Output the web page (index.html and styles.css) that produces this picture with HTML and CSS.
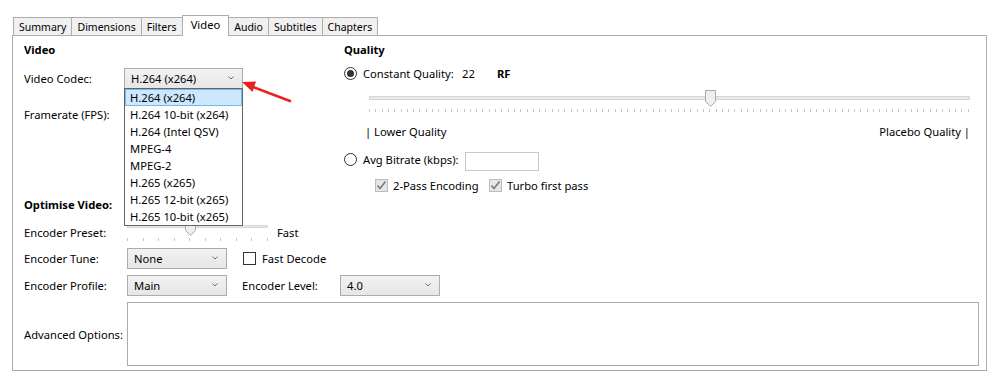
FILE: index.html
```html
<!DOCTYPE html>
<html lang="en">
<head>
    <meta charset="UTF-8">
    <title>Video</title>
    <link rel="stylesheet" href="styles.css">
</head>
<body>
    <div class="window">
        <div class="tabs">
            <div class="tab first">Summary</div>
            <div class="tab">Dimensions</div>
            <div class="tab">Filters</div>
            <div class="tab active">Video</div>
            <div class="tab">Audio</div>
            <div class="tab">Subtitles</div>
            <div class="tab">Chapters</div>
        </div>

        <div class="panel">
            <div class="top">
                <div class="col-left">
                    <div class="heading">Video</div>

                    <div class="row row-codec">
                        <span class="label">Video Codec:</span>
                        <div class="codec-wrap">
                            <div class="select select-codec">H.264 (x264)<svg class="chev" width="6" height="4" viewBox="0 0 6 4"><polyline points="0.5,0.5 3,3 5.5,0.5" fill="none" stroke="#707070" stroke-width="1"/></svg></div>
                            <ul class="dropdown">
                                <li class="selected">H.264 (x264)</li>
                                <li>H.264 10-bit (x264)</li>
                                <li>H.264 (Intel QSV)</li>
                                <li>MPEG-4</li>
                                <li>MPEG-2</li>
                                <li>H.265 (x265)</li>
                                <li>H.265 12-bit (x265)</li>
                                <li>H.265 10-bit (x265)</li>
                            </ul>
                            <svg class="callout" width="60" height="34" viewBox="0 0 60 34">
                                <line x1="16" y1="12.6" x2="54" y2="27" stroke="#e8231c" stroke-width="2.6" stroke-linecap="round"/>
                                <polygon points="6,8 20,7.5 16.5,18" fill="#e8231c"/>
                            </svg>
                        </div>
                    </div>

                    <div class="row row-fps">
                        <span class="label">Framerate (FPS):</span>
                    </div>

                    <div class="heading heading-opt">Optimise Video:</div>

                    <div class="row row-preset">
                        <span class="label">Encoder Preset:</span>
                        <div class="preset-slider">
                            <div class="track"></div>
                            <div class="ticks"></div>
                            <svg class="thumb" style="left: 44.5%" width="11" height="17" viewBox="0 0 11 17"><path d="M0.5,0.5 H10.5 V11.5 L5.5,16.5 L0.5,11.5 Z" fill="#efefef" stroke="#a9a9a9"/></svg>
                        </div>
                        <span class="preset-value">Fast</span>
                    </div>

                    <div class="row row-tune">
                        <span class="label">Encoder Tune:</span>
                        <div class="select">None<svg class="chev" width="6" height="4" viewBox="0 0 6 4"><polyline points="0.5,0.5 3,3 5.5,0.5" fill="none" stroke="#707070" stroke-width="1"/></svg></div>
                        <span class="checkbox"></span>
                        <span>Fast Decode</span>
                    </div>

                    <div class="row row-profile">
                        <span class="label">Encoder Profile:</span>
                        <div class="select">Main<svg class="chev" width="6" height="4" viewBox="0 0 6 4"><polyline points="0.5,0.5 3,3 5.5,0.5" fill="none" stroke="#707070" stroke-width="1"/></svg></div>
                        <span class="level-label">Encoder Level:</span>
                        <div class="select">4.0<svg class="chev" width="6" height="4" viewBox="0 0 6 4"><polyline points="0.5,0.5 3,3 5.5,0.5" fill="none" stroke="#707070" stroke-width="1"/></svg></div>
                    </div>
                </div>

                <div class="col-right">
                    <div class="heading">Quality</div>

                    <div class="row row-cq">
                        <span class="radio checked"></span>
                        <span class="cq-label">Constant Quality:</span>
                        <span class="cq-value">22</span>
                        <b>RF</b>
                    </div>

                    <div class="q-slider">
                        <div class="track"></div>
                        <div class="ticks"></div>
                        <svg class="thumb" style="left: 56.8%" width="11" height="17" viewBox="0 0 11 17"><path d="M0.5,0.5 H10.5 V11.5 L5.5,16.5 L0.5,11.5 Z" fill="#efefef" stroke="#a9a9a9"/></svg>
                    </div>

                    <div class="q-labels">
                        <span>| Lower Quality</span>
                        <span>Placebo Quality |</span>
                    </div>

                    <div class="row row-avg">
                        <span class="radio"></span>
                        <span class="avg-label">Avg Bitrate (kbps):</span>
                        <span class="textbox"></span>
                    </div>

                    <div class="row row-pass">
                        <span class="checkbox checked"><svg width="11" height="11" viewBox="0 0 11 11"><polyline points="1.5,5.5 4,8.5 9.5,1.5" fill="none" stroke="#7a7a7a" stroke-width="1.6"/></svg></span>
                        <span class="pass-label">2-Pass Encoding</span>
                        <span class="checkbox checked"><svg width="11" height="11" viewBox="0 0 11 11"><polyline points="1.5,5.5 4,8.5 9.5,1.5" fill="none" stroke="#7a7a7a" stroke-width="1.6"/></svg></span>
                        <span>Turbo first pass</span>
                    </div>
                </div>
            </div>

            <div class="row row-adv">
                <span class="label">Advanced Options:</span>
                <div class="textarea"></div>
            </div>
        </div>
    </div>
</body>
</html>
```

FILE: styles.css
```css
body {
    margin: 0;
    font-family: 'Noto Sans', 'Open Sans', sans-serif;
    font-size: 11.2px;
    color: #000;
    background: #fff;
}
.window {
    padding: 15px 0 0 12px;
}

/* tabs */
.tabs {
    display: flex;
    align-items: flex-end;
    height: 20px;
    padding-left: 1px;
    font-size: 10.5px;
}
.tab {
    height: 18px;
    line-height: 18px;
    padding: 0 5px;
    box-sizing: border-box;
    border: 1px solid #acacac;
    border-bottom: none;
    border-left: none;
    background: #f0f0f0;
}
.tab.first {
    border-left: 1px solid #acacac;
}
.tab.active {
    position: relative;
    height: 21px;
    line-height: 17px;
    margin-bottom: -1px;
    margin-left: -1px;
    padding: 0 8px;
    background: #fff;
    border-left: 1px solid #acacac;
    font-size: 11.2px;
    z-index: 1;
}

/* panel */
.panel {
    width: 975px;
    height: 336px;
    box-sizing: border-box;
    border: 1px solid #acacac;
    padding: 6px 16px 0 11px;
}
.top {
    display: flex;
}
.col-left {
    width: 320px;
    flex: none;
}
.col-right {
    flex: 1;
}
.heading {
    height: 16px;
    line-height: 16px;
    font-weight: bold;
}
.row {
    display: flex;
    align-items: center;
    white-space: nowrap;
}
.label {
    width: 103px;
    flex: none;
}

/* left column */
.row-codec {
    margin-top: 10px;
    height: 21px;
}
.codec-wrap {
    position: relative;
    margin-left: -3px;
}
.select {
    display: flex;
    align-items: center;
    justify-content: space-between;
    flex: none;
    width: 100px;
    height: 21px;
    box-sizing: border-box;
    padding: 0 8px 1px 6px;
    border: 1px solid #acacac;
    background: linear-gradient(#f2f2f2, #e6e6e6);
}
.select-codec {
    width: 119px;
}
.dropdown {
    position: absolute;
    top: 20px;
    left: 0;
    width: 119px;
    box-sizing: border-box;
    margin: 0;
    padding: 0;
    list-style: none;
    border: 1px solid #646464;
    background: #fff;
    z-index: 2;
}
.dropdown li {
    height: 17px;
    line-height: 16px;
    padding: 1px 0 0 5px;
    box-sizing: border-box;
    white-space: nowrap;
}
.dropdown li.selected {
    background: #cce8ff;
    border: 1px solid #7ab8e6;
    padding: 0 0 0 4px;
    line-height: 16px;
}
.callout {
    position: absolute;
    left: 112px;
    top: 6px;
    z-index: 3;
}
.row-fps {
    margin-top: 15px;
    height: 20px;
}
.heading-opt {
    margin-top: 73px;
}
.row-preset {
    margin-top: 9px;
    height: 20px;
}
.preset-slider {
    position: relative;
    flex: none;
    width: 141px;
    height: 20px;
    margin-right: 9px;
}
.track {
    position: absolute;
    left: 0;
    right: 0;
    top: 3px;
    height: 3px;
    box-sizing: border-box;
    border: 1px solid #d6d6d6;
    background: #e7eaea;
}
.ticks {
    position: absolute;
    left: 0;
    right: 0;
    top: 16px;
    height: 3px;
    background: repeating-linear-gradient(to right, #c4c4c4 0 1px, transparent 1px 15.55px);
}
.thumb {
    position: absolute;
    top: -3px;
    margin-left: -5px;
}
.row-tune {
    margin-top: 6px;
    height: 21px;
}
.row-tune .select {
    margin-right: 16px;
}
.checkbox {
    display: inline-flex;
    align-items: center;
    justify-content: center;
    width: 13px;
    height: 13px;
    box-sizing: border-box;
    border: 1px solid #333;
    background: #fff;
    margin-right: 6px;
    flex: none;
}
.checkbox.checked {
    border-color: #bcbcbc;
    background: #e6e6e6;
}
.row-profile {
    margin-top: 6px;
    height: 21px;
}
.level-label {
    flex: none;
    width: 98px;
    margin-left: 15px;
}

/* right column */
.row-cq {
    margin-top: 5px;
    height: 20px;
}
.radio {
    display: inline-flex;
    align-items: center;
    justify-content: center;
    width: 13px;
    height: 13px;
    box-sizing: border-box;
    border: 1px solid #333;
    border-radius: 50%;
    margin-right: 6px;
    flex: none;
}
.radio.checked::after {
    content: "";
    width: 7px;
    height: 7px;
    border-radius: 50%;
    background: #333;
}
.cq-label {
    width: 99px;
}
.cq-value {
    width: 35px;
}
.q-slider {
    position: relative;
    height: 26px;
    margin: 5px 0 0 25px;
}
.q-slider .track {
    top: 8px;
    height: 4px;
}
.q-slider .ticks {
    top: 21px;
    background: repeating-linear-gradient(to right, #c4c4c4 0 1px, transparent 1px 6.3px);
}
.q-slider .thumb {
    top: 2px;
}
.q-labels {
    display: flex;
    justify-content: space-between;
    height: 17px;
    line-height: 17px;
    margin-top: 9px;
    padding-left: 21px;
}
.row-avg {
    margin-top: 10px;
    height: 19px;
}
.avg-label {
    width: 102px;
}
.textbox {
    width: 74px;
    height: 19px;
    box-sizing: border-box;
    border: 1px solid #c8c8c8;
    margin-top: 4px;
}
.row-pass {
    margin-top: 7px;
    height: 18px;
    padding-left: 31px;
}
.pass-label {
    width: 96px;
}
.row-pass .checkbox {
    margin-right: 5px;
}

/* advanced */
.row-adv {
    margin-top: 6px;
}
.textarea {
    flex: 1;
    height: 64px;
    box-sizing: border-box;
    border: 1px solid #acacac;
    margin-right: -9px;
}
```
